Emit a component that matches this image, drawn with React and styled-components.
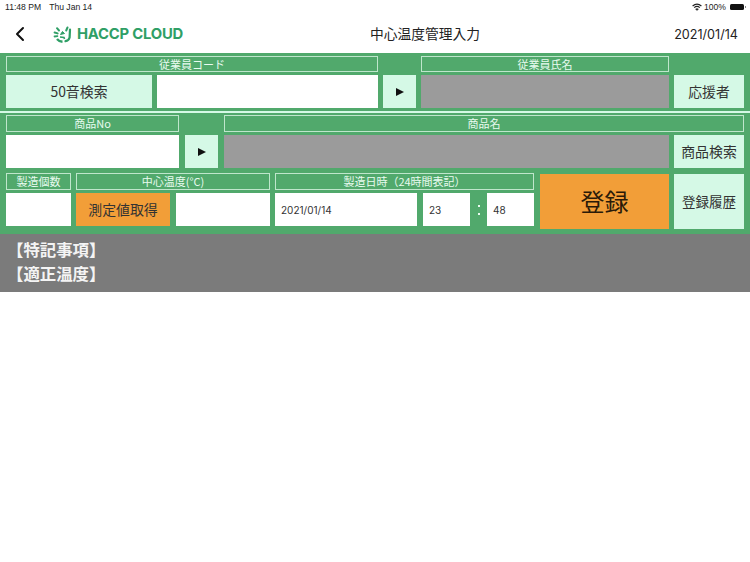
import React from "react";
import styled, { createGlobalStyle } from "styled-components";

const Global = createGlobalStyle`
  html, body { margin: 0; padding: 0; background: #fff; }
  body { width: 750px; height: 562px; overflow: hidden; font-family: "Inter", "Noto Sans CJK JP", sans-serif; }
`;
const JP = `"Noto Sans CJK JP", sans-serif`;
const Screen = styled.div`width: 750px; height: 562px; background: #fff; display: flex; flex-direction: column;`;
const StatusBar = styled.div`
  height: 15px; display: flex; align-items: center; justify-content: space-between;
  padding: 0 5px 1px 5px; box-sizing: border-box; font-size: 8.6px; color: #222;
  font-family: "Liberation Sans", sans-serif;
`;
const StatusLeft = styled.div`display: flex; gap: 8px;`;
const StatusRight = styled.div`display: flex; align-items: center; gap: 2px;`;
const Battery = styled.span`
  position: relative; display: inline-block; width: 14px; height: 6px; background: #111; border-radius: 1.5px; margin: 0 1px 0 2px;
  &::after { content: ""; position: absolute; right: -2px; top: 2px; width: 1px; height: 2px; background: #888; }
`;
const Header = styled.header`
  height: 38px; display: grid; grid-template-columns: 53px 317px 1fr auto; align-items: center;
  padding-right: 12px; color: #222;
`;
const Back = styled.div`display: flex; padding-left: 14px;`;
const Logo = styled.div`display: flex; align-items: center; gap: 5px;`;
const LogoText = styled.span`
  font-family: "Inter", sans-serif; font-weight: 700; font-size: 14.8px; color: #2f9f66; letter-spacing: -0.2px;
`;
const Title = styled.div`font-family: ${JP}; font-size: 13.75px; width: 110px; text-align: center; white-space: nowrap; padding-bottom: 2px;`;
const DateText = styled.div`font-family: "Inter", sans-serif; font-size: 12.6px; grid-column: 4; white-space: nowrap;`;
const Panel = styled.section`background: #51a96c; height: 181px; box-sizing: border-box; padding: 3px 6px 0;`;
const Row = styled.div`display: flex; gap: 5px; align-items: flex-end;`;
const Divider = styled.div`height: 2px; background: #d5f9e6; margin: 3px -6px 2px;`;
const ProductGrid = styled.div`
  display: grid; grid-template-columns: 173px 6px 33px 6px 445px 5px 70px; grid-template-rows: 17px 33px; row-gap: 3px;
`;
const Column = styled.div`
  display: flex; flex-direction: column; gap: 3px; width: ${p => p.$w}px; flex: none;
`;
const Label = styled.div`
  height: ${p => p.$h || 17}px; box-sizing: border-box; border: 1px solid #bfe6cc; color: #e9fbf0;
  font-family: ${JP}; font-size: 11px; line-height: ${p => (p.$h || 17) - 2}px; text-align: center; white-space: nowrap;
  ${p => p.$span && `grid-column: ${p.$span};`}
`;
const Cell = styled.div`
  height: 33px; box-sizing: border-box; flex: none; display: flex; align-items: center;
  justify-content: ${p => (p.$text ? "flex-start" : "center")};
  padding: ${p => (p.$text ? "0 0 0 6px" : "0 0 2px")};
  width: ${p => (p.$w ? `${p.$w}px` : "100%")};
  background: ${p => ({ white: "#fff", mint: "#d5f9e6", grey: "#9b9b9b", orange: "#f29e38" }[p.$kind])};
  color: #333; font-family: ${p => (p.$text ? `"Inter", sans-serif` : JP)};
  font-size: ${p => (p.$text ? "10px" : "13.9px")}; white-space: nowrap;
  ${p => p.$col && `grid-column: ${p.$col}; grid-row: 2;`}
`;
const Triangle = styled.span`
  width: 0; height: 0; margin-top: 2px;
  border-left: 8px solid #111; border-top: 4.5px solid transparent; border-bottom: 4.5px solid transparent;
`;
const Pair = styled.div`display: flex; gap: ${p => p.$gap}px;`;
const Colon = styled.div`
  width: 5px; height: 33px; display: flex; flex-direction: column; justify-content: center; gap: 6px; align-items: center;
  &::before, &::after { content: ""; width: 2px; height: 2px; background: #e9fbf0; }
`;
const BottomRow = styled.div`display: flex; gap: 5px; margin-top: 5px; align-items: flex-start;`;
const BigButton = styled.div`
  height: 55px; margin-top: 1px; margin-left: ${p => p.$nudge || 0}px; box-sizing: border-box; flex: none; width: ${p => p.$w}px;
  display: flex; align-items: center; justify-content: center; padding-bottom: 2px;
  background: ${p => (p.$kind === "orange" ? "#f29e38" : "#d5f9e6")}; color: ${p => (p.$kind === "orange" ? "#2a1a08" : "#333")};
  font-family: ${JP}; font-size: ${p => p.$size}px;
`;
const Notes = styled.section`
  background: #7b7b7b; height: 58px; box-sizing: border-box; padding: 3px 7px 0; color: #f4f4f4;
  font-family: ${JP}; font-weight: 700; font-size: 16.4px; line-height: 24px;
`;

const LogoMark = () => (
  <svg width="19" height="17" viewBox="0 0 19 17" fill="none" stroke="#2f9f66">
    <path d="M4 2.2 L6 4.5" strokeWidth="2" strokeLinecap="round" />
    <path d="M1.6 6.5 L4.6 7.4" strokeWidth="2" strokeLinecap="round" />
    <path d="M1.5 10.5 L4.4 10.2" strokeWidth="1.8" strokeLinecap="round" />
    <path d="M14.5 1.5 L13.2 4.5" strokeWidth="2" strokeLinecap="round" />
    <path d="M17 3.5 L16.6 11.5 Q15.8 14.5 12.5 15.2" strokeWidth="2.2" strokeLinecap="round" />
    <path d="M9.5 5.5 L11.5 7.5 L7.5 8.5 Z" fill="#2f9f66" strokeWidth="1" />
    <path d="M4 13 Q6 15.5 9.5 15.8" strokeWidth="2.4" />
    <path d="M7 11 L11 11.5 L11.5 13" strokeWidth="1.6" />
  </svg>
);

export default function App() {
  return (
    <Screen>
      <Global />
      <StatusBar>
        <StatusLeft><span>11:48 PM</span><span>Thu Jan 14</span></StatusLeft>
        <StatusRight>
          <svg width="10" height="8" viewBox="0 0 10 8" fill="none" stroke="#222">
            <path d="M0.6 3 Q5 -0.8 9.4 3" strokeWidth="1.2" />
            <path d="M2.2 4.6 Q5 2.2 7.8 4.6" strokeWidth="1.2" />
            <path d="M5 7.6 L3.5 6 Q5 5 6.5 6 Z" fill="#222" strokeWidth="0.4" />
          </svg>
          <span>100%</span>
          <Battery />
        </StatusRight>
      </StatusBar>
      <Header>
        <Back>
          <svg width="12" height="16" viewBox="0 0 12 16" fill="none">
            <path d="M9 2 L3 8 L9 14" stroke="#111" strokeWidth="2" strokeLinecap="round" strokeLinejoin="round" />
          </svg>
        </Back>
        <Logo><LogoMark /><LogoText>HACCP CLOUD</LogoText></Logo>
        <Title>中心温度管理入力</Title>
        <DateText>2021/01/14</DateText>
      </Header>
      <Panel>
        <Row>
          <Column $w={372}>
            <Label $h={16}>従業員コード</Label>
            <Pair $gap={5}>
              <Cell $kind="mint" $w={146}>50音検索</Cell>
              <Cell $kind="white" $w={221} />
            </Pair>
          </Column>
          <Cell $kind="mint" $w={33}><Triangle /></Cell>
          <Column $w={248}>
            <Label $h={16}>従業員氏名</Label>
            <Cell $kind="grey" />
          </Column>
          <Cell $kind="mint" $w={70}>応援者</Cell>
        </Row>
        <Divider />
        <ProductGrid>
          <Label $span="1">商品No</Label>
          <Label $span="5 / 8">商品名</Label>
          <Cell $kind="white" $col="1" />
          <Cell $kind="mint" $col="3"><Triangle /></Cell>
          <Cell $kind="grey" $col="5" />
          <Cell $kind="mint" $col="7">商品検索</Cell>
        </ProductGrid>
        <BottomRow>
          <Column $w={65}>
            <Label>製造個数</Label>
            <Cell $kind="white" />
          </Column>
          <Column $w={194}>
            <Label>中心温度(°C)</Label>
            <Pair $gap={6}>
              <Cell $kind="orange" $w={94}>測定値取得</Cell>
              <Cell $kind="white" $w={94} />
            </Pair>
          </Column>
          <Column $w={259}>
            <Label>製造日時（24時間表記）</Label>
            <Pair $gap={6}>
              <Cell $kind="white" $w={142} $text>2021/01/14</Cell>
              <Cell $kind="white" $w={47} $text>23</Cell>
              <Colon />
              <Cell $kind="white" $w={47} $text>48</Cell>
            </Pair>
          </Column>
          <BigButton $w={129} $kind="orange" $size={24} $nudge={1}>登録</BigButton>
          <BigButton $w={70} $size={13.5}>登録履歴</BigButton>
        </BottomRow>
      </Panel>
      <Notes>
        <div>【特記事項】</div>
        <div>【適正温度】</div>
      </Notes>
    </Screen>
  );
}
